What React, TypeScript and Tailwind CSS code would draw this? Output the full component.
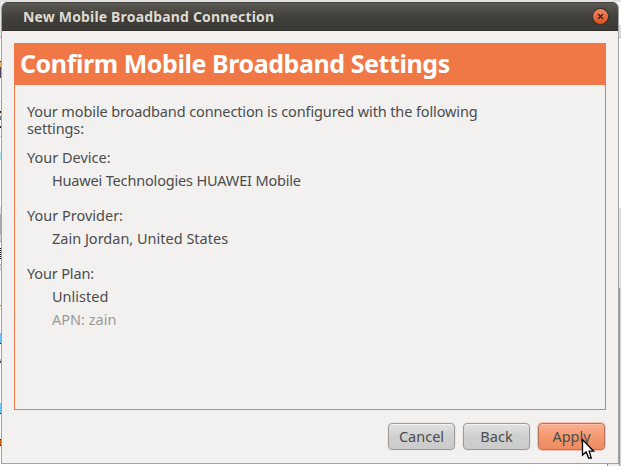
import type { ReactNode } from "react";

const leftMarks = [
  "top-[0px] h-[37px] bg-[#e4e4e4]",
  "top-[37px] h-px bg-[#b5b5b5]",
  "top-[61px] h-px bg-[#333]",
  "top-[62px] h-[5px] bg-[#e8b56a]",
  "top-[67px] h-[11px] bg-[#4c4660]",
  "top-[101px] h-px bg-[#d0d0d0]",
  "top-[111px] h-[2px] bg-[#222]",
  "top-[116px] h-[2px] bg-[#b06c30]",
  "top-[118px] h-[2px] bg-[#3a78b0]",
  "top-[126px] h-[2px] bg-[#222]",
  "top-[136px] h-px bg-[#d0d0d0]",
  "top-[152px] h-[8px] bg-[#b5e6f5]",
  "top-[207px] h-[7px] bg-[#dcdcdc]",
  "top-[214px] h-[21px] bg-[#ababab]",
  "top-[235px] h-[6px] bg-[#d0d0d0]",
  "top-[241px] h-px bg-[#999]",
  "top-[248px] h-px bg-black",
  "top-[250px] h-px bg-black",
  "top-[252px] h-px bg-black",
  "top-[254px] h-px bg-black",
  "top-[256px] h-px bg-black",
  "top-[258px] h-px bg-black",
  "top-[264px] h-px bg-[#aaa]",
  "top-[265px] h-[6px] bg-[#d8d8d8]",
  "top-[305px] h-px bg-[#b08050]",
  "top-[306px] h-[4px] bg-[#f8f3c8]",
  "top-[333px] h-[10px] bg-[#6bc4f2]",
  "top-[343px] h-px bg-[#222]",
  "top-[359px] h-[2px] bg-[#dcb980]",
  "top-[361px] h-[2px] bg-[#28508c]",
  "top-[403px] h-[10px] bg-[#6bc4f2]",
  "top-[413px] h-px bg-[#222]",
  "top-[439px] h-px bg-[#402010]",
  "top-[440px] h-[5px] bg-[#c8560c]",
  "top-[445px] h-px bg-[#402010]",
];

function Line({ className = "", children }: { className?: string; children: ReactNode }) {
  return <div className={`h-[17px] leading-[17px] ${className}`}>{children}</div>;
}

function Button({ primary, className = "", children }: { primary?: boolean; className?: string; children: ReactNode }) {
  const look = primary
    ? "border-[#b5735a] bg-linear-to-b from-[#fbb092] via-[#f5986f] to-[#ee8b62] shadow-[inset_0_1px_0_#ffc1aa,0_0_0_1px_#f6c3b0]"
    : "border-[#9d9c9a] bg-linear-to-b from-[#e3e3e3] via-[#cfcfcf] to-[#cbcbcb] shadow-[inset_0_1px_0_#f3f3f3,0_0_0_1px_#e9e8e6]";
  return (
    <button className={`flex h-[27px] w-[67px] items-center justify-center rounded-[4px] border text-[14.5px] leading-[17px] ${look} ${className}`}>
      {children}
    </button>
  );
}

export default function App() {
  return (
    <div className="relative h-[466px] w-[621px] overflow-hidden bg-white pt-[2px] pl-px font-['Noto_Sans','Open_Sans',sans-serif] text-[14.5px] text-[#4c4c4c]">
      <div className="absolute inset-x-0 top-0 h-[2px] bg-[#e0e0e0]" />
      {leftMarks.map((mark) => (
        <div key={mark} className={`absolute left-0 w-px ${mark}`} />
      ))}
      <div className="absolute top-[25px] right-0 h-[12px] w-[2px] bg-[#dedede]" />
      <div className="absolute top-[37px] right-0 h-px w-[2px] bg-[#b5b5b5]" />
      <div className="absolute top-[464px] left-[607px] h-[2px] w-px bg-[#888]" />
      <div className="absolute top-[464px] left-[608px] h-[2px] w-[11px] bg-[#ececec]" />
      <div className="absolute top-[208px] right-0 h-[80px] w-[2px] bg-[#e0e0e0]" />
      <div className="absolute top-[288px] right-0 h-[178px] w-px bg-[#d0d0d0]" />
      <div className="absolute top-[288px] right-px h-[178px] w-px bg-[#999]" />

      <div className="relative flex h-[462px] w-[618px] flex-col overflow-hidden rounded-t-[6px] border border-t-0 border-[#a3a3a3] bg-[#f2f1f0]">
        <header className="-mx-px flex h-[29px] shrink-0 items-center justify-between border-t border-b border-t-[#484742] border-b-[#302f2b] bg-linear-to-b from-[#5a5953] via-[#3f3e39] via-55% to-[#3c3b37] pr-[11px] pl-[22px]">
          <h1 className="text-[14px] leading-[17px] font-bold tracking-[0.17px] whitespace-nowrap text-[#dfdbd2]">New Mobile Broadband Connection</h1>
          <button aria-label="Close" className="flex size-[15px] items-center justify-center rounded-full bg-linear-to-b from-[#f58560] to-[#e04d10] shadow-[0_0_0_1px_#33322d]">
            <svg viewBox="0 0 15 15" className="size-[15px]" fill="none" stroke="#3c2118" strokeWidth="1.3">
              <path d="M5 5L10 10M10 5L5 10" />
            </svg>
          </button>
        </header>

        <main className="mx-3 mt-3 flex h-[367px] shrink-0 flex-col border border-[#f07746]">
          <h2 className="-mx-px -mt-px h-[42px] shrink-0 bg-[#f07746] pl-[6px] text-[25px] leading-[40px] font-bold tracking-[-0.43px] whitespace-nowrap text-white">
            Confirm Mobile Broadband Settings
          </h2>
          <div className="flex flex-col pt-[18px] pl-3 whitespace-nowrap">
            <p className="leading-[17px] tracking-[-0.12px]">
              Your mobile broadband connection is configured with the following
              <br />
              settings:
            </p>
            <Line className="mt-3">Your Device:</Line>
            <Line className="mt-[6px] pl-[25px] tracking-[-0.17px]">Huawei Technologies HUAWEI Mobile</Line>
            <Line className="mt-[18px]">Your Provider:</Line>
            <Line className="mt-[6px] pl-[25px]">Zain Jordan, United States</Line>
            <Line className="mt-[18px] tracking-[-0.15px]">Your Plan:</Line>
            <Line className="mt-[6px] pl-[25px]">Unlisted</Line>
            <Line className="mt-[6px] pl-[25px] text-[#9c9a98]">APN: zain</Line>
          </div>
        </main>

        <footer className="mt-[13px] flex justify-end gap-2 pr-[13px]">
          <Button>Cancel</Button>
          <Button>Back</Button>
          <Button primary>Apply</Button>
        </footer>
      </div>

      <svg className="absolute top-[438px] left-[581px] h-[22px] w-[14px]" viewBox="0 0 14 22">
        <path d="M1.5 1.5V17L5.2 13.9L7.6 20H10.2L8.2 13.2H12.7Z" fill="white" stroke="black" strokeWidth="1.3" />
      </svg>
    </div>
  );
}
